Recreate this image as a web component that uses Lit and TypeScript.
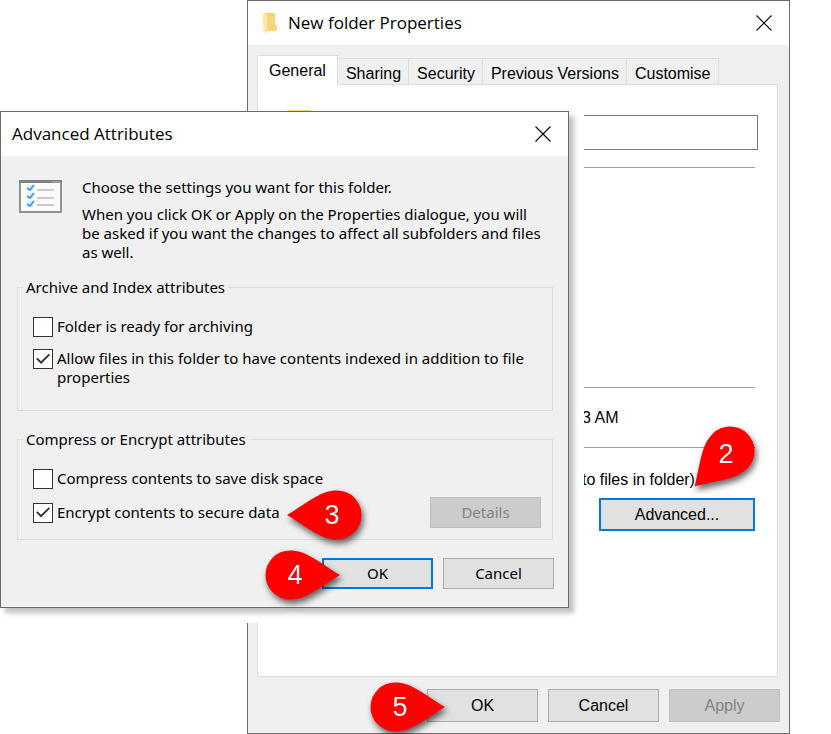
import { LitElement, html, css, svg } from "lit";
import { customElement, property } from "lit/decorators.js";

const closeIcon = html`<svg width="16" height="16" viewBox="0 0 16 16" aria-hidden="true">
  <path d="M.5 .5 15.5 15.5M15.5 .5 .5 15.5" stroke="#000" stroke-width="1.1" fill="none" />
</svg>`;

const folderShape = svg`
  <path d="M2 0h10v13l1 1v4H4L1 16z" fill="#f5d67c" />
  <path d="M12 11 14 13v5h-2z" fill="#f7d98a" />
  <path d="M0 0 4 2v18L3 20 0 17z" fill="#fde7a4" />`;

@customElement("step-pin")
class StepPin extends LitElement {
  @property({ type: Number }) step = 1;
  @property({ type: Number }) angle = 0;

  static styles = css`
    :host {
      display: block;
      width: 76px;
      height: 50px;
      pointer-events: none;
    }
    .pin {
      display: block;
      overflow: visible;
      filter: drop-shadow(2px 4px 3px rgba(0, 0, 0, 0.6));
    }
    .drop {
      fill: #f00;
    }
    .number {
      fill: #fff;
      font: 27px "Liberation Sans", Arial, sans-serif;
      text-anchor: middle;
    }
  `;

  render() {
    const rad = (this.angle * Math.PI) / 180;
    const numberX = 25 + Math.round(5 * Math.cos(rad));
    const numberY = 34 + Math.round(4 * Math.sin(rad));
    return html`<svg class="pin" width="76" height="50" viewBox="0 0 76 50" role="img" aria-label="Step ${this.step}">
      <path
        class="drop"
        transform="rotate(${this.angle} 25 25)"
        d="M25 .5C41 .5 52 11 75 25C52 39 41 49.5 25 49.5A24.5 24.5 0 0 1 25 .5z"
      />
      <text class="number" x=${numberX} y=${numberY}>${this.step}</text>
    </svg>`;
  }
}

@customElement("app-root")
class AppRoot extends LitElement {
  static styles = css`
    :host {
      display: block;
      background: #fff;
      color: #000;
      font: 16px/19px "Liberation Sans", Arial, sans-serif;
    }
    * {
      box-sizing: border-box;
    }
    h1,
    p,
    hr,
    fieldset {
      margin: 0;
    }
    button,
    input {
      font: inherit;
      color: inherit;
    }
    .desktop {
      position: relative;
      padding: 0 41px 0 247px;
    }
    .window {
      border: 1px solid #6b6b6b;
      background: #f0f0f0;
    }
    .titlebar {
      display: flex;
      align-items: center;
      gap: 10px;
      height: 44px;
      padding: 0 17px 0 11px;
      background: #fff;
    }
    .title {
      flex: 1;
      font: 17px/24px "Open Sans", "Noto Sans", sans-serif;
      white-space: nowrap;
    }
    .close {
      display: grid;
      padding: 0;
      border: 0;
      background: none;
    }
    .folder-small {
      margin-left: 4px;
    }
    .btn {
      width: 111px;
      height: 33px;
      padding: 0;
      border: 1px solid #adadad;
      border-radius: 0;
      background: #e1e1e1;
    }
    .btn:disabled {
      border-color: #bfbfbf;
      background: #ccc;
      color: #838383;
    }
    .btn.primary {
      border: 2px solid #0078d7;
    }
    .btn.wide {
      width: 156px;
    }
    .actions {
      display: flex;
      justify-content: flex-end;
      gap: 10px;
    }
    .pointed {
      position: relative;
      display: flex;
    }
    .pin-left {
      position: absolute;
      left: -57px;
      top: calc(50% - 24px);
    }

    .properties-body {
      padding: 10px 9px 11px;
    }
    .tabs {
      display: flex;
      align-items: flex-end;
    }
    .tab {
      height: 27px;
      margin-bottom: -1px;
      padding: 3px 7px 0 8px;
      border: 1px solid #dcdcdc;
      border-left: 0;
      border-radius: 0;
      background: #f0f0f0;
      white-space: nowrap;
    }
    .tab.selected {
      position: relative;
      height: 30px;
      padding: 0 11px;
      border-left: 1px solid #dcdcdc;
      border-bottom-color: #fff;
      background: #fff;
    }
    .panel {
      display: flex;
      justify-content: space-between;
      align-items: flex-start;
      margin-right: 2px;
      padding: 25px 19px 145px 29px;
      border: 1px solid #dcdcdc;
      background: #fff;
    }
    .details {
      display: flex;
      flex-direction: column;
      width: 176px;
      padding-top: 5px;
    }
    .name {
      height: 35px;
      width: 100%;
      border: 1px solid #7a7a7a;
      border-radius: 0;
      background: #fff;
    }
    .info {
      display: flex;
      flex-direction: column;
      padding: 17px 3px 0 0;
    }
    .rule {
      width: 100%;
      height: 1px;
      border: 0;
      background: #a0a0a0;
    }
    .sizes {
      height: 219px;
    }
    .created {
      padding: 20px 0;
    }
    .note {
      position: relative;
      padding: 22px 0 9px;
      white-space: nowrap;
    }
    .pin-note {
      position: absolute;
      left: 123px;
      bottom: 22px;
    }
    .advanced {
      align-self: flex-end;
    }
    .properties-actions {
      padding-top: 12px;
    }

    .front {
      position: absolute;
      top: 111px;
      left: 0;
      right: 247px;
      padding: 0 15px 15px 0;
      background: #fff;
    }
    .attributes {
      box-shadow: 5px 5px 5px rgba(0, 0, 0, 0.25);
      font: 15px/19px "Noto Sans", "Open Sans", sans-serif;
    }
    .attributes .btn {
      height: 31px;
    }
    .attributes-body {
      padding: 22px 14px 18px 16px;
    }
    .intro {
      display: flex;
      gap: 20px;
      padding: 0 10px 16px 2px;
    }
    .intro-icon {
      flex: none;
      margin-top: 2px;
    }
    .intro-text {
      display: grid;
      gap: 8px;
    }
    .group {
      display: grid;
      gap: 12px;
      min-width: 0;
      margin: 0 1px 19px 0;
      padding: 20px 11px 23px 15px;
      border: 1px solid #dcdcdc;
    }
    .group.encrypt {
      gap: 8px;
      margin-bottom: 18px;
      padding-bottom: 11px;
    }
    .legend {
      margin-left: -10px;
      padding: 0 3px;
    }
    .option {
      display: flex;
      align-items: flex-start;
      gap: 4px;
      min-height: 20px;
    }
    .check {
      appearance: none;
      flex: none;
      display: grid;
      width: 20px;
      height: 20px;
      margin: 0;
      border: 1px solid #333;
      background: #fff;
    }
    .check:checked::before {
      content: "";
      background: #333;
      clip-path: polygon(12% 50%, 19% 43%, 39% 63%, 82% 21%, 89% 28%, 39% 78%);
    }
    .row {
      display: flex;
      align-items: center;
    }
    .row .btn {
      margin-left: auto;
    }
    .pin-row {
      position: relative;
      width: 76px;
      height: 20px;
      margin-left: 8px;
    }
    .pin-encrypt {
      position: absolute;
      top: -13px;
      left: 24px;
    }
  `;

  render() {
    return html`<main class="desktop">
      <section class="window" aria-labelledby="properties-title">
        <header class="titlebar">
          <svg class="folder-small" width="15" height="20" viewBox="0 0 15 20" aria-hidden="true">${folderShape}</svg>
          <h1 class="title" id="properties-title">New folder Properties</h1>
          <button class="close" aria-label="Close">${closeIcon}</button>
        </header>
        <div class="properties-body">
          <div class="tabs" role="tablist">
            <button class="tab selected" role="tab" aria-selected="true">General</button>
            ${["Sharing", "Security", "Previous Versions", "Customise"].map(
              (name) => html`<button class="tab" role="tab" aria-selected="false">${name}</button>`
            )}
          </div>
          <div class="panel" role="tabpanel">
            <svg width="24" height="30" viewBox="0 0 24 30" aria-hidden="true">
              <path d="M0 0h24v30H0z" fill="#f7d774" />
            </svg>
            <div class="details">
              <input class="name" type="text" aria-label="Folder name" />
              <div class="info">
                <hr class="rule" />
                <div class="sizes"></div>
                <hr class="rule" />
                <p class="created">3 AM</p>
                <hr class="rule" />
                <div class="note">
                  to files in folder)
                  <step-pin class="pin-note" step="2" angle="135"></step-pin>
                </div>
                <button class="btn primary wide advanced">Advanced...</button>
              </div>
            </div>
          </div>
          <footer class="actions properties-actions">
            <div class="pointed">
              <button class="btn">OK</button>
              <step-pin class="pin-left" step="5"></step-pin>
            </div>
            <button class="btn">Cancel</button>
            <button class="btn" disabled>Apply</button>
          </footer>
        </div>
      </section>

      <div class="front">
        <section class="window attributes" aria-labelledby="attributes-title">
          <header class="titlebar">
            <h1 class="title" id="attributes-title">Advanced Attributes</h1>
            <button class="close" aria-label="Close">${closeIcon}</button>
          </header>
          <div class="attributes-body">
            <div class="intro">
              <svg class="intro-icon" width="43" height="33" viewBox="0 0 43 33" aria-hidden="true">
                <path d="M1 1h41v31H1z" fill="#fbfbfb" stroke="#8f9496" stroke-width="2" />
                <path d="M0 0h43v3H0z" fill="#7d8385" />
                <path d="M33 2h2M36 2h2M39 2h2" stroke="#c8cccd" />
                <path d="M8 5h6v6H8zM8 13h6v6H8zM8 21h6v6H8z" fill="#dcebf7" />
                <path d="M8 8l3 2 4-5M8 16l3 2 4-5M8 24l3 2 4-5" stroke="#4a9fe0" stroke-width="2" fill="none" />
                <path d="M18 10h17M18 18h17M18 25h17" stroke="#c9c9c9" stroke-width="2" />
              </svg>
              <div class="intro-text">
                <p>Choose the settings you want for this folder.</p>
                <p>
                  When you click OK or Apply on the Properties dialogue, you will be asked if you want the
                  changes to affect all subfolders and files as well.
                </p>
              </div>
            </div>
            <fieldset class="group">
              <legend class="legend">Archive and Index attributes</legend>
              <label class="option"><input class="check" type="checkbox" />Folder is ready for archiving</label>
              <label class="option"
                ><input class="check" type="checkbox" checked /><span
                  >Allow files in this folder to have contents indexed in addition to file properties</span
                ></label
              >
            </fieldset>
            <fieldset class="group encrypt">
              <legend class="legend">Compress or Encrypt attributes</legend>
              <label class="option"><input class="check" type="checkbox" />Compress contents to save disk space</label>
              <div class="row">
                <label class="option"
                  ><input class="check" type="checkbox" checked />Encrypt contents to secure data</label
                >
                <div class="pin-row">
                  <step-pin class="pin-encrypt" step="3" angle="180"></step-pin>
                </div>
                <button class="btn" disabled>Details</button>
              </div>
            </fieldset>
            <footer class="actions">
              <div class="pointed">
                <button class="btn primary">OK</button>
                <step-pin class="pin-left" step="4"></step-pin>
              </div>
              <button class="btn">Cancel</button>
            </footer>
          </div>
        </section>
      </div>
    </main>`;
  }
}
